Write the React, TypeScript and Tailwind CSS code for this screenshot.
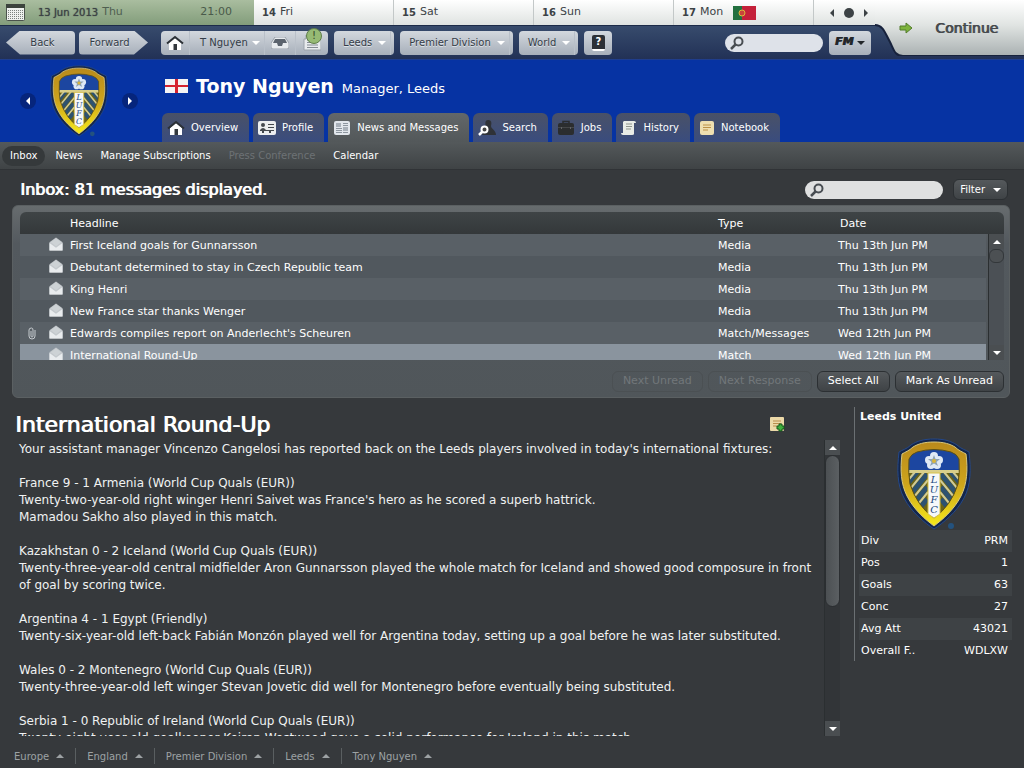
import { useState } from 'react'
import type { ReactNode } from 'react'
import clsx from 'clsx'

const DAYS = [
  { num: '14', day: 'Fri' },
  { num: '15', day: 'Sat' },
  { num: '16', day: 'Sun' },
  { num: '17', day: 'Mon', flag: true },
]

const MESSAGES = [
  { headline: 'First Iceland goals for Gunnarsson', type: 'Media', date: 'Thu 13th Jun PM' },
  { headline: 'Debutant determined to stay in Czech Republic team', type: 'Media', date: 'Thu 13th Jun PM' },
  { headline: 'King Henri', type: 'Media', date: 'Thu 13th Jun PM' },
  { headline: 'New France star thanks Wenger', type: 'Media', date: 'Thu 13th Jun PM' },
  { headline: "Edwards compiles report on Anderlecht's Scheuren", type: 'Match/Messages', date: 'Wed 12th Jun PM', clip: true },
  { headline: 'International Round-Up', type: 'Match', date: 'Wed 12th Jun PM' },
]

const REPORTS = [
  ["Your assistant manager Vincenzo Cangelosi has reported back on the Leeds players involved in today's international fixtures:"],
  [
    'France 9 - 1 Armenia (World Cup Quals (EUR))',
    "Twenty-two-year-old right winger Henri Saivet was France's hero as he scored a superb hattrick.",
    'Mamadou Sakho also played in this match.',
  ],
  [
    'Kazakhstan 0 - 2 Iceland (World Cup Quals (EUR))',
    'Twenty-three-year-old central midfielder Aron Gunnarsson played the whole match for Iceland and showed good composure in front of goal by scoring twice.',
  ],
  [
    'Argentina 4 - 1 Egypt (Friendly)',
    'Twenty-six-year-old left-back Fabián Monzón played well for Argentina today, setting up a goal before he was later substituted.',
  ],
  [
    'Wales 0 - 2 Montenegro (World Cup Quals (EUR))',
    'Twenty-three-year-old left winger Stevan Jovetic did well for Montenegro before eventually being substituted.',
  ],
  [
    'Serbia 1 - 0 Republic of Ireland (World Cup Quals (EUR))',
    'Twenty-eight-year-old goalkeeper Keiren Westwood gave a solid performance for Ireland in this match.',
  ],
]

const STATS = [
  ['Div', 'PRM'],
  ['Pos', '1'],
  ['Goals', '63'],
  ['Conc', '27'],
  ['Avg Att', '43021'],
  ['Overall F..', 'WDLXW'],
]

const SUBTABS = ['Inbox', 'News', 'Manage Subscriptions', 'Press Conference', 'Calendar']
const CRUMBS = ['Europe', 'England', 'Premier Division', 'Leeds', 'Tony Nguyen']

const silver = 'bg-linear-to-b from-[#d3d8de] to-[#a7afba] text-[#343c47] text-[10px] [text-shadow:0_1px_0_#dfe3e8]'
const darkBtn = 'h-[21px] rounded-md border border-[#2c3033] bg-linear-to-b from-[#55595c] to-[#3f4346] text-white'
const heavy = '[text-shadow:1px_0_0_currentColor]'

function Tri({ dir, size = 8, className }: { dir: 'up' | 'down' | 'left' | 'right'; size?: number; className?: string }) {
  const d = { up: 'M0 6L4 2L8 6Z', down: 'M0 2L4 6L8 2Z', left: 'M6 0L2 4L6 8Z', right: 'M2 0L6 4L2 8Z' }[dir]
  return (
    <svg width={size} height={size} viewBox="0 0 8 8" className={clsx('shrink-0', className)} aria-hidden="true">
      <path d={d} fill="currentColor" />
    </svg>
  )
}

function Crest({ className, id }: { className?: string; id: string }) {
  return (
    <svg viewBox="0 0 74 92" className={className} role="img" aria-label="Leeds United crest">
      <defs>
        <linearGradient id={id} x1="0" y1="0" x2="0" y2="1">
          <stop offset="0" stopColor="#b98a1c" />
          <stop offset="0.5" stopColor="#cda41c" />
          <stop offset="1" stopColor="#f6ea1a" />
        </linearGradient>
        <clipPath id={id + 'c'}>
          <path d="M12 21Q14 16 20 14Q37 9 54 14Q60 16 62 21Q63 35 61 46Q54 68 37 80Q20 68 13 46Q11 35 12 21Z" />
        </clipPath>
      </defs>
      <path d="M37 1C47 1 54 3 60 7C64 11 69 12 72 14C74 31 74 47 67 60C59 75 46 85 37 91C28 85 15 75 7 60C0 47 0 31 2 14C5 12 10 11 14 7C20 3 27 1 37 1Z" fill="#14264a" stroke="#24488a" />
      <path d="M37 4C47 4 53 6 58 9C62 13 66 14 69 16C71 32 70 46 64 58C57 72 45 82 37 88C29 82 17 72 10 58C4 46 3 32 5 16C8 14 12 13 16 9C21 6 27 4 37 4Z" fill={'url(#' + id + ')'} stroke="#d8c77c" />
      <g clipPath={'url(#' + id + 'c)'}>
        <path d="M8 8H66V33H8Z" fill="#1c46a0" />
        <path d="M8 35H66V85H8Z" fill="#6b6416" />
        <g stroke="#2d5270" strokeWidth="5" fill="none">
          <path d="M30 36L11 60M30 49L16 67M20 34L8 49M30 61L22 71" />
          <path d="M44 36L63 60M44 49L58 67M54 34L66 49M44 61L52 71" />
        </g>
        <g stroke="#d0ca96" strokeWidth="2" fill="none">
          <path d="M27 34L9 56M31 42L12 65M31 54L18 70M18 34L8 46" />
          <path d="M47 34L65 56M43 42L62 65M43 54L56 70M56 34L66 46" />
        </g>
        <path d="M8 32H66V35H8Z" fill="#d9cf8a" />
      </g>
      <path d="M12 21Q14 16 20 14Q37 9 54 14Q60 16 62 21Q63 35 61 46Q54 68 37 80Q20 68 13 46Q11 35 12 21Z" fill="none" stroke="#5d5015" />
      <g fill="#dfe9f5">
        <circle cx="37" cy="18" r="4" />
        <circle cx="42" cy="22" r="4" />
        <circle cx="40" cy="27" r="4" />
        <circle cx="34" cy="27" r="4" />
        <circle cx="32" cy="22" r="4" />
      </g>
      <path d="M37 17L38.500 21H43L39.500 24L41 28L37 25.500L33 28L34.500 24L31 21H35.500Z" fill="#8ea3b4" />
      <circle cx="37" cy="23" r="2" fill="#d9b53a" />
      <path d="M31 35H43V76L37 80L31 76Z" fill="#f5f8fa" stroke="#d8c24a" />
      <g fill="#24497f" fontFamily="DejaVu Serif, serif" fontSize="10" fontStyle="italic" textAnchor="middle">
        <text x="37" y="45">L</text>
        <text x="37" y="55">U</text>
        <text x="37" y="65">F</text>
        <text x="37" y="75">C</text>
      </g>
      <circle cx="54" cy="88" r="3" fill="#24527e" />
    </svg>
  )
}

function SearchBox({ label, className }: { label: string; className?: string }) {
  return (
    <label className={clsx('flex h-[18px] items-center gap-1 rounded-full px-1', className)}>
      <svg width="15" height="14" viewBox="0 0 15 14" fill="none" stroke="#484d52" className="shrink-0" aria-hidden="true">
        <circle cx="9.500" cy="5.500" r="4" strokeWidth="2" />
        <path d="M6.500 8.500L2 13" strokeWidth="2.500" />
      </svg>
      <input type="text" aria-label={label} className="w-full min-w-0 bg-transparent text-[11px] text-gray-800 outline-none" />
    </label>
  )
}

function HouseIcon({ size = 18 }: { size?: number }) {
  return (
    <svg width={size} height={size} viewBox="0 0 18 18" aria-hidden="true">
      <path d="M3 9L9 4L15 9V16H3Z" fill="#fff" />
      <path d="M1 9.500L9 3L17 9.500" fill="none" stroke="#2c3136" strokeWidth="2" />
      <path d="M7.500 10H11V16H7.500Z" fill="#33383d" />
    </svg>
  )
}

const TABS: { label: string; icon: ReactNode }[] = [
  { label: 'Overview', icon: <HouseIcon /> },
  {
    label: 'Profile',
    icon: (
      <svg width="18" height="18" viewBox="0 0 18 18">
        <rect x="0" y="2" width="18" height="14" rx="2" fill="#eceeef" />
        <circle cx="5" cy="6" r="2" fill="#45494d" />
        <path d="M2 11Q5 7 8 11Z M10 5H16V6H10ZM10 8H16V9H10ZM4 11H6V14H4ZM11 11H13V14H11Z M2 11H16V12H2Z" fill="#45494d" />
      </svg>
    ),
  },
  {
    label: 'News and Messages',
    icon: (
      <svg width="18" height="18" viewBox="0 0 18 18">
        <rect x="1" y="2" width="16" height="14" rx="2" fill="#e2e7ec" />
        <rect x="3" y="4" width="5" height="4" fill="#a9b1b9" />
        <path d="M10 4.500H15M10 6.500H15M3 9.500H9M3 11.500H9M3 13.500H9M10 13.500H15" stroke="#8d969f" />
        <rect x="10" y="8" width="5" height="4" fill="#a9b1b9" />
      </svg>
    ),
  },
  {
    label: 'Search',
    icon: (
      <svg width="18" height="18" viewBox="0 0 18 18">
        <path d="M10 1C13 1 14 3 13 7C13 10 18 11 18 16H4C5 12 8 11 8 8C7 4 7 1 10 1Z" fill="#2f3237" />
        <circle cx="6.500" cy="10.500" r="3" fill="#444" stroke="#fff" strokeWidth="2" />
        <path d="M4 13L1 16" stroke="#fff" strokeWidth="2.500" />
      </svg>
    ),
  },
  {
    label: 'Jobs',
    icon: (
      <svg width="18" height="18" viewBox="0 0 18 18">
        <path d="M6 5V2.500H12V5" fill="none" stroke="#2a2c2e" strokeWidth="1.500" />
        <rect x="1" y="4" width="16" height="12" rx="2" fill="#2b2d2f" />
        <path d="M1 8.500H17" stroke="#444648" />
        <path d="M4 8H5V10H4ZM13 8H14V10H13Z" fill="#606264" />
      </svg>
    ),
  },
  {
    label: 'History',
    icon: (
      <svg width="16" height="18" viewBox="0 0 16 18">
        <path d="M3 2H13Q15 2 15 4H13V15Q13 16 11 16H2Q0 16 0 14H2V3Z" fill="#e9ece6" />
        <path d="M5 5H11M5 7.500H11M5 10H10" stroke="#8f958c" />
      </svg>
    ),
  },
  {
    label: 'Notebook',
    icon: (
      <svg width="16" height="18" viewBox="0 0 16 18">
        <rect x="1" y="2" width="14" height="14" rx="2" fill="#efdfb0" />
        <path d="M4 6H12M4 8.500H12M4 11H9" stroke="#bd9248" />
      </svg>
    ),
  },
]

function MenuButton({ children }: { children: ReactNode }) {
  return (
    <button type="button" aria-haspopup="menu" className={clsx('flex h-6 items-center gap-1.5 rounded pr-[3px] pl-[9px]', silver)}>
      {children}
      <span className="flex h-full items-center border-r border-[#b9c0c9] pr-1">
        <Tri dir="down" className="text-white" />
      </span>
    </button>
  )
}

function Header() {
  return (
    <header className="flex bg-linear-to-b from-[#374b6c] from-45% to-[#223156]">
      <div className="min-w-0 flex-1">
        {/* date strip */}
        <div className="flex h-[26px] border-b border-[#1c2b49] bg-linear-to-b from-white to-[#dfe3e1] text-[11px] text-[#3c4245]">
          <div className="flex w-[254px] shrink-0 items-center bg-linear-to-b from-[#a9bd9f] to-[#839d7b] pr-[22px] pl-1.5">
            <svg width="19" height="17" viewBox="0 0 19 17" className="mr-[13px]" aria-hidden="true">
              <rect x="0.500" y="0.500" width="18" height="16" rx="1" fill="#eef1ee" stroke="#4b544c" />
              <path d="M0 0H19V4H0Z" fill="#3b433d" />
              <path d="M2 6.500H17M2 8.500H17M2 10.500H17M2 12.500H17M2 14.500H17" stroke="#7b827d" strokeDasharray="1 1" />
            </svg>
            <span className="text-[10px] [text-shadow:0_0_1px_#3c4245]">13 Jun 2013</span>
            <span className="ml-1 text-[#4f5f50]">Thu</span>
            <span className="ml-auto text-[11px] text-[#4a5a4a]">21:00</span>
          </div>
          {DAYS.map(d => (
            <div key={d.num} className="flex w-[140px] shrink-0 items-center gap-1 border-r border-[#c3c8c8] pl-2">
              <span className="text-[10px] font-bold">{d.num}</span>
              <span>{d.day}</span>
              {d.flag && (
                <svg width="23" height="14" viewBox="0 0 23 14" className="ml-1.5" role="img" aria-label="Portugal">
                  <path d="M0 0H23V14H0Z" fill="#c4213a" />
                  <path d="M0 0H9V14H0Z" fill="#23703f" />
                  <circle cx="9" cy="7" r="3" fill="#c9443a" stroke="#d9b93a" />
                </svg>
              )}
            </div>
          ))}
          <div className="flex flex-1 items-center justify-center gap-2 pl-2">
            <button type="button" aria-label="Previous days"><Tri dir="left" /></button>
            <button type="button" aria-label="Today" className="size-[10px] shrink-0 rounded-full bg-[#3c4245]" />
            <button type="button" aria-label="Next days"><Tri dir="right" /></button>
          </div>
        </div>

        {/* navigation */}
        <nav className="flex h-[33px] items-center gap-1.5 pl-1.5">
          <button type="button" className={clsx('h-6 w-[69px] rounded pl-1 [clip-path:polygon(0_50%,14px_0,100%_0,100%_100%,14px_100%)]', silver)}>Back</button>
          <button type="button" className={clsx('-ml-0.5 h-6 w-[69px] rounded pr-2 [clip-path:polygon(0_0,55px_0,100%_50%,55px_100%,0_100%)]', silver)}>Forward</button>
          <div className={clsx('relative ml-[7px] flex h-6 items-center rounded', silver)}>
            <button type="button" aria-label="Home" className="flex h-full w-[29px] items-center justify-center border-r border-[#b9c0c9]"><HouseIcon /></button>
            <button type="button" aria-haspopup="menu" className="flex h-full w-[75px] items-center justify-between border-r border-[#b9c0c9] pr-1 pl-[10px]">
              T Nguyen <Tri dir="down" className="text-white" />
            </button>
            <button type="button" aria-label="Inbox" className="flex h-full w-[31px] items-center justify-center border-r border-[#b9c0c9]">
              <svg width="18" height="12" viewBox="0 0 18 12">
                <path d="M4 0H14L18 6V10Q18 12 16 12H2Q0 12 0 10V6Z" fill="#e8ebee" stroke="#9aa1aa" />
                <path d="M4 2H14L16 6H12L11 9H7L6 6H2Z" fill="#5b636d" />
              </svg>
            </button>
            <button type="button" aria-label="News" className="flex h-full w-[32px] items-center justify-center">
              <svg width="18" height="16" viewBox="0 0 18 16">
                <path d="M3 0H18V15H1V4H3Z" fill="#e8ebee" stroke="#9ba2aa" />
                <path d="M4 5H15M4 7.500H15M4 10H15M4 12.500H15" stroke="#858c94" />
              </svg>
            </button>
            <span className="absolute -top-[3px] right-[6px] flex size-4 items-center justify-center rounded-full border border-[#5f7d4b] bg-[#96ba74] text-[10px] text-[#31482a] [text-shadow:none]">!</span>
          </div>
          <div className="flex gap-1.5">
            <MenuButton>Leeds</MenuButton>
            <MenuButton>Premier Division</MenuButton>
            <MenuButton>World</MenuButton>
            <button type="button" aria-label="Help" className={clsx('flex h-6 w-7 items-center justify-center rounded', silver)}>
              <span className="flex h-4 w-[13px] items-center justify-center rounded-xs border-b-2 border-white bg-[#2c3036] font-bold text-white [text-shadow:none]">?</span>
            </button>
          </div>
          <SearchBox label="Search" className="ml-auto w-[98px] bg-[#dee2e9]" />
          <button type="button" aria-haspopup="menu" className={clsx('mr-1 flex h-6 w-[42px] items-center justify-center gap-1 rounded', silver)}>
            <span className="text-[11px] font-bold text-[#22262b] italic [text-shadow:1px_0_0_currentColor]">FM</span>
            <Tri dir="down" className="text-[#22262b]" />
          </button>
        </nav>
      </div>

      <button type="button" className="relative flex h-14 w-[149px] items-center pl-6 text-sm text-[#45494c]">
        <svg viewBox="0 0 149 56" preserveAspectRatio="none" className="absolute inset-0 size-full" aria-hidden="true">
          <defs>
            <linearGradient id="cont" x1="0" y1="0" x2="0" y2="1">
              <stop offset="0" stopColor="#fff" />
              <stop offset="0.45" stopColor="#e0e4e2" />
              <stop offset="1" stopColor="#a9b0b1" />
            </linearGradient>
          </defs>
          <path d="M0 0H149V56H28C20 56 19 50 15 42C10 33 8 25 0 25Z" fill="url(#cont)" />
          <path d="M0 25C8 25 10 33 15 42C19 50 20 56 28 56H149" fill="none" stroke="#17223c" strokeWidth="2" />
        </svg>
        <svg width="14" height="12" viewBox="0 0 14 12" className="relative" aria-hidden="true">
          <path d="M1 4H7V1L13 6L7 11V8H1Z" fill="#7db33c" stroke="#527d2b" />
        </svg>
        <span className={clsx('relative ml-[22px]', heavy)}>Continue</span>
      </button>
    </header>
  )
}

function Banner({ tab, onTab }: { tab: string; onTab: (t: string) => void }) {
  const arrow = 'flex size-4 items-center justify-center rounded-full bg-[#06257c] text-white'
  return (
    <section className="flex h-[83px] border-t border-[#1f3d8d] bg-[#0633a3] text-white">
      <div className="flex w-[162px] shrink-0 items-center justify-center gap-[14px] pr-1">
        <button type="button" aria-label="Previous" className={arrow}><Tri dir="left" /></button>
        <Crest id="crestTop" className="h-[72px] w-[58px]" />
        <button type="button" aria-label="Next" className={arrow}><Tri dir="right" /></button>
      </div>
      <div className="flex min-w-0 flex-1 flex-col justify-between">
        <div className="mt-3 flex items-baseline gap-2 pl-[3px]">
          <svg width="23" height="14" viewBox="0 0 23 14" role="img" aria-label="England">
            <path d="M0 0H23V14H0Z" fill="#f4f4f4" />
            <path d="M10 0H13V14H10ZM0 6H23V8H0Z" fill="#d5232f" />
          </svg>
          <h1 className="text-[19px] leading-7 font-bold">Tony Nguyen</h1>
          <span className="text-[13px]">Manager, Leeds</span>
        </div>
        <div className="flex gap-1" role="tablist">
          {TABS.map(t => (
            <button
              key={t.label}
              type="button"
              role="tab"
              aria-selected={tab === t.label}
              onClick={() => onTab(t.label)}
              className={clsx(
                'flex h-[29px] items-center gap-1.5 rounded-t-md pr-[11px] pl-[5px] text-[10px]',
                tab === t.label ? 'bg-linear-to-b from-[#626769] to-[#53585a]' : 'bg-linear-to-b from-[#495167] to-[#3a4c7e]',
              )}
            >
              {t.icon}
              {t.label}
            </button>
          ))}
        </div>
      </div>
    </section>
  )
}

function Scrollbar({ className, children }: { className?: string; children: ReactNode }) {
  return (
    <div className={clsx('flex w-4 shrink-0 flex-col border-l border-[#2b2f31] text-white', className)}>
      <button type="button" aria-label="Scroll up" className="flex h-[15px] items-center justify-center bg-[#4a4e51]"><Tri dir="up" /></button>
      {children}
      <button type="button" aria-label="Scroll down" className="mt-auto flex h-[15px] items-center justify-center bg-[#4a4e51]"><Tri dir="down" /></button>
    </div>
  )
}

function Inbox({ selected, onSelect }: { selected: number; onSelect: (i: number) => void }) {
  return (
    <section className="mr-[14px] ml-3 rounded-md border border-[#5b6062] bg-linear-to-b from-[#676c6e] via-[#53595e] via-20% to-[#50565a] pt-1.5 pr-[5px] pb-[5px] pl-[7px]">
      <div className="flex h-[148px] overflow-hidden rounded-t-md">
        <table className="w-full table-fixed self-start text-left text-[11px] text-white">
          <colgroup>
            <col className="w-6" />
            <col className="w-[26px]" />
            <col />
            <col className="w-[120px]" />
            <col className="w-[148px]" />
          </colgroup>
          <thead>
            <tr className="h-[22px] bg-linear-to-b from-[#3f4446] to-[#34383a]">
              <th aria-label="Attachment" />
              <th aria-label="Status" />
              <th className="pt-0.5 font-normal">Headline</th>
              <th className="pt-0.5 font-normal">Type</th>
              <th className="pt-0.5 pl-0.5 font-normal">Date</th>
            </tr>
          </thead>
          <tbody>
            {MESSAGES.map((m, i) => (
              <tr
                key={m.headline}
                onClick={() => onSelect(i)}
                className={clsx('h-[22px]', selected === i ? 'bg-[#8a949e]' : i % 2 ? 'bg-[#51585e]' : 'bg-[#596066]')}
              >
                <td className="pl-2">
                  {m.clip && (
                    <svg width="8" height="13" viewBox="0 0 8 13" fill="none" stroke="#c6cbcf" aria-label="Attachment">
                      <path d="M3 4V9Q3 10 4 10Q5 10 5 9V3Q5 1 3.500 1Q1 1 1 3V9Q1 12 4 12Q7 12 7 9V3" />
                    </svg>
                  )}
                </td>
                <td className="pb-0.5 pl-[5px]">
                  <svg width="14" height="14" viewBox="0 0 15 14" aria-hidden="true">
                    <path d="M0.500 5L7.500 0L14.500 5V14H0.500Z" fill="#c3c8cc" />
                    <path d="M0.500 6L7.500 11L14.500 6V14H0.500Z" fill="#e9ecee" />
                    <path d="M2 5L7.500 9.500L13 5L7.500 1Z" fill="#cdd2d5" />
                  </svg>
                </td>
                <td className="pt-0.5">{m.headline}</td>
                <td className="pt-0.5">{m.type}</td>
                <td className="pt-0.5">{m.date}</td>
              </tr>
            ))}
          </tbody>
        </table>
        <div className="flex w-[18px] shrink-0 flex-col">
          <div className="h-[22px] bg-linear-to-b from-[#3f4446] to-[#34383a]" />
          <Scrollbar className="ml-0.5 flex-1 bg-[#4b5055]">
            <div className="h-[14px] rounded-md border border-[#33373a] bg-[#4c5053]" />
          </Scrollbar>
        </div>
      </div>
      <div className="mt-[11px] flex justify-end gap-[5px] text-[11px]">
        <button type="button" disabled className="h-[21px] rounded-md border border-[#4b5053] px-[10px] text-[#72777a]">Next Unread</button>
        <button type="button" disabled className="h-[21px] rounded-md border border-[#4b5053] px-[10px] text-[#72777a]">Next Response</button>
        <button type="button" className={clsx(darkBtn, 'px-[10px]')}>Select All</button>
        <button type="button" className={clsx(darkBtn, 'px-[10px]')}>Mark As Unread</button>
      </div>
    </section>
  )
}

function ClubPanel() {
  return (
    <aside className="mt-[9px] mr-3 h-[254px] w-[158px] shrink-0 border-l border-[#6b7073] pl-1 text-[11px] text-white">
      <h3 className="pt-0.5 pl-px text-[11px] font-bold">Leeds United</h3>
      <Crest id="crestSide" className="mt-3 ml-[38px] h-[92px] w-[74px]" />
      <table className="w-full">
        <tbody>
          {STATS.map(([k, v]) => (
            <tr key={k} className="h-[22px] odd:bg-[#3e4245]">
              <th scope="row" className="pt-0.5 pl-0.5 text-left font-normal">{k}</th>
              <td className="pt-0.5 pr-1 text-right">{v}</td>
            </tr>
          ))}
        </tbody>
      </table>
    </aside>
  )
}

export default function App() {
  const [tab, setTab] = useState('News and Messages')
  const [sub, setSub] = useState('Inbox')
  const [selected, setSelected] = useState(5)

  return (
    <div className="flex h-screen flex-col overflow-hidden bg-[#36393c] font-['DejaVu_Sans',sans-serif] leading-normal">
      <Header />
      <Banner tab={tab} onTab={setTab} />

      <nav className="flex h-7 shrink-0 items-center gap-0.5 border-b border-[#303336] bg-linear-to-b from-[#54595b] to-[#3f4345] pl-0.5 text-[10px] text-white">
        {SUBTABS.map(s => (
          <button
            key={s}
            type="button"
            disabled={s === 'Press Conference'}
            onClick={() => setSub(s)}
            className={clsx('h-5 rounded-full px-2 disabled:text-[#6d7275]', sub === s && 'bg-[#35393b]')}
          >
            {s}
          </button>
        ))}
      </nav>

      <div className="flex h-[35px] shrink-0 items-center pt-1 pr-4 pl-5 text-white">
        <h2 className={clsx('text-base', heavy)}>Inbox: 81 messages displayed.</h2>
        <SearchBox label="Search messages" className="mr-[10px] ml-auto w-[138px] bg-[#dfe0e0]" />
        <button type="button" aria-haspopup="menu" className={clsx(darkBtn, 'flex items-center gap-2 px-1.5 text-[10px]')}>
          Filter <Tri dir="down" />
        </button>
      </div>

      <Inbox selected={selected} onSelect={setSelected} />

      <main className="flex min-h-0 flex-1">
        <article className="flex min-w-0 flex-1 flex-col">
          <div className="flex h-[42px] shrink-0 items-center justify-between pt-[10px] pr-[55px] pl-[15px] text-white">
            <h2 className={clsx('text-[22px]', heavy)}>{MESSAGES[5].headline}</h2>
            <button type="button" aria-label="Add note">
              <svg width="15" height="15" viewBox="0 0 15 15">
                <rect x="0" y="0" width="14" height="14" rx="1" fill="#ecd9a8" />
                <path d="M3 4H11M3 6.500H11M3 9H7" stroke="#b98d4c" />
                <path d="M9 7H12V9H14V12H12V14H9V12H7V9H9Z" fill="#3fae3c" stroke="#14561b" />
              </svg>
            </button>
          </div>
          <div className="flex min-h-0 flex-1">
            <div className="flex-1 space-y-[17px] overflow-hidden pt-px pl-[19px] text-xs leading-[17px] text-[#f0f2f2]">
              {REPORTS.map(lines => (
                <div key={lines[0]}>
                  {lines.map(l => <p key={l}>{l}</p>)}
                </div>
              ))}
            </div>
            <Scrollbar className="bg-[#323538]">
              <div className="h-[152px] rounded-lg border border-[#2b2e31] bg-linear-to-r from-[#4c5053] to-[#5b5f62]" />
            </Scrollbar>
          </div>
        </article>
        <div className="w-[14px] shrink-0" />
        <ClubPanel />
      </main>

      <footer className="flex h-8 shrink-0 items-center pt-2 text-[10px] text-[#9da2a4]">
        {CRUMBS.map(c => (
          <button key={c} type="button" className="flex h-4 items-center gap-[7px] border-r border-[#5a5f61] pr-[11px] pl-[11px] first:pl-[14px] last:border-r-0">
            {c} <Tri dir="up" />
          </button>
        ))}
      </footer>
    </div>
  )
}
